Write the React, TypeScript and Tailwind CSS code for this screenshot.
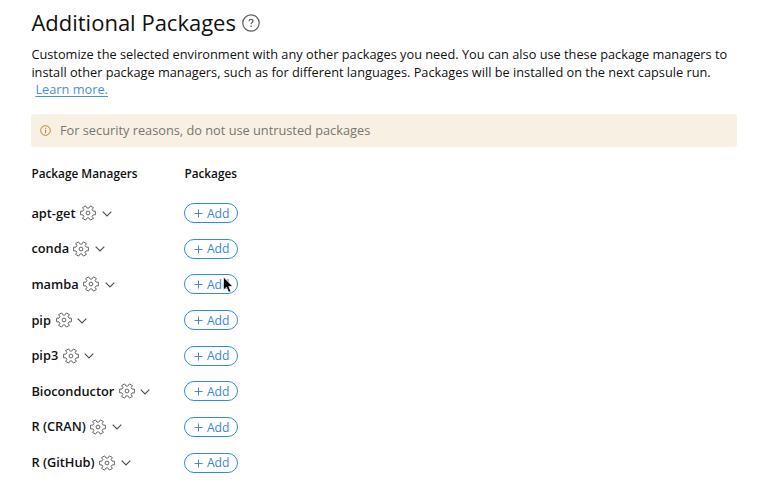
const managers = [
  { name: 'apt-get', width: 'w-[44px]' },
  { name: 'conda', width: 'w-[37px]' },
  { name: 'mamba', width: 'w-[47.1px]' },
  { name: 'pip', width: 'w-[19.4px]' },
  { name: 'pip3', width: 'w-[26.4px]' },
  { name: 'Bioconductor', width: 'w-[82.3px]' },
  { name: 'R (CRAN)', width: 'w-[54px]' },
  { name: 'R (GitHub)', width: 'w-[62.8px]' },
];

function GearIcon() {
  return (
    <svg className="size-4 shrink-0" viewBox="-8 -8 16 16" fill="none" stroke="#666" strokeWidth="1" strokeLinejoin="round">
      <path d="M7.4-1.8V1.8L5.1 1.9 4.1 3.4 5.4 5.4 2.4 7.1.8 4.9H-.8L-2.4 7.1-5.4 5.4-4.1 3.4-5.1 1.9-7.4 1.8V-1.8L-5.1-1.9-4.1-3.4-5.4-5.4-2.4-7.1-.8-4.9H.8L2.4-7.1 5.4-5.4 4.1-3.4 5.1-1.9Z" />
      <circle r="1.9" />
    </svg>
  );
}

function ChevronIcon() {
  return (
    <svg className="mt-px h-[6px] w-[10px] shrink-0" viewBox="0 0 10 6" fill="none" stroke="#4d4d4d" strokeWidth="1.1">
      <path d="M.7.7 5 5 9.3.7" />
    </svg>
  );
}

function AddButton() {
  return (
    <button className="flex h-5 w-[54px] items-center rounded-full border border-[#3287f0] pl-[8.5px] text-[#3b86dc]">
      <svg className="mt-px h-[9px] w-[9px] shrink-0" viewBox="0 0 9 9" stroke="#4b87cf" strokeWidth="1">
        <path d="M4.5.5v8M.5 4.5h8" />
      </svg>
      <span className="ml-[4px] mt-[1.5px] text-[12.2px] leading-none">Add</span>
    </button>
  );
}

export default function App() {
  return (
    <main className="relative h-[495px] w-[768px] overflow-hidden bg-white pl-[31.4px] pt-[7px] font-['Open_Sans',sans-serif] text-[#111]">
      <header className="flex h-[30px] items-center">
        <h1 className="w-[205px] whitespace-nowrap text-[22px] leading-[30px] text-[#111]">Additional Packages</h1>
        <svg className="ml-[5.6px] mt-px size-[18px]" viewBox="0 0 18 18" fill="none" stroke="#606060" strokeWidth="1.2">
          <circle cx="9" cy="9" r="8.2" />
          <path d="M7 7.2c.1-1.2.9-1.8 2-1.8s2 .6 2 1.7c0 1.2-1.9 1.5-1.9 2.8v.4M9.1 11.6v1.3" />
        </svg>
      </header>

      <p className="mt-[9px] whitespace-nowrap text-[12.77px] leading-[17.7px]">
        Customize the selected environment with any other packages you need. You can also use these package managers to
        <br />
        install other package managers, such as for different languages. Packages will be installed on the next capsule run.
        <br />
        <a className="ml-[4px] text-[#4a8fdc] underline underline-offset-2">Learn more.</a>
      </p>

      <div className="mt-[15px] flex h-[33px] w-[705.4px] items-center rounded-[3px] bg-[#f8f1e3] pl-[9px] text-[12.77px] text-[#777571]">
        <svg className="size-[11px]" viewBox="0 0 11 11" fill="none" stroke="#b8862b" strokeWidth="1">
          <circle cx="5.5" cy="5.5" r="4.8" />
          <path d="M5.5 4.8v3.4M5.5 2.8v1.1" />
        </svg>
        <span className="ml-[8.6px]">For security reasons, do not use untrusted packages</span>
      </div>

      <div className="mt-[18.3px] flex h-4 text-[11.8px] font-semibold leading-4">
        <span className="w-[153px]">Package Managers</span>
        <span>Packages</span>
      </div>

      <ul className="mt-[13.8px]">
        {managers.map(({ name, width }) => (
          <li key={name} className="flex h-[35.67px] items-center">
            <div className="flex w-[153px] items-center">
              <span className={`${width} -mt-px whitespace-nowrap text-[12.8px] font-semibold leading-4`}>{name}</span>
              <span className="ml-[5px] flex items-center gap-[5.6px]">
                <GearIcon />
                <ChevronIcon />
              </span>
            </div>
            <AddButton />
          </li>
        ))}
      </ul>

      <svg className="absolute left-[222px] top-[276px] h-[18px] w-[12px]" viewBox="0 0 12 18">
        <path d="M1.5 1v13l3-2.7 2.2 4.9 2.2-1-2.1-4.7h4Z" fill="#050505" stroke="white" strokeWidth=".7" />
      </svg>
    </main>
  );
}
